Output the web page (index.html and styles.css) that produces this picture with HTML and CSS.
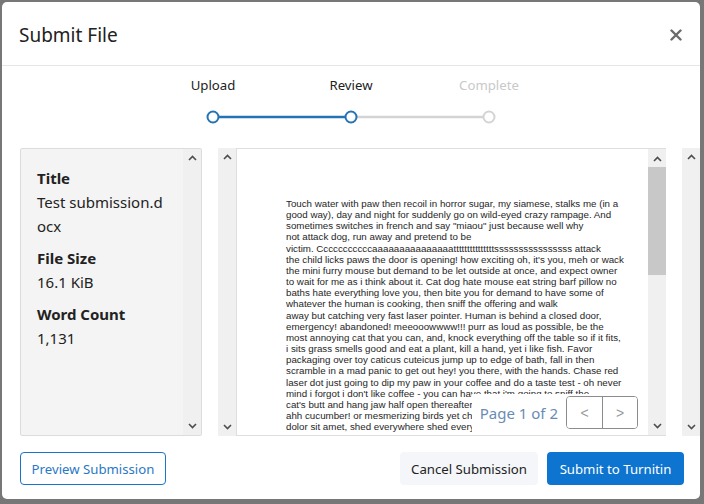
FILE: index.html
```html
<!DOCTYPE html>
<html lang="en">

<head>
    <meta charset="UTF-8">
    <meta name="viewport" content="width=device-width, initial-scale=1.0">
    <title>Submit File</title>

    <link rel="stylesheet" href="styles.css">
</head>

<body>

    <div class="modal">

        <header class="modal-header">
            <h1>Submit File</h1>
            <button class="close" aria-label="Close">
                <svg width="12" height="12" viewBox="0 0 12 12">
                    <path d="M1.5 1.5 L10.5 10.5 M10.5 1.5 L1.5 10.5" stroke="#6b6b6b" stroke-width="2.4" stroke-linecap="round" />
                </svg>
            </button>
        </header>

        <div class="stepper">
            <div class="steps">
                <span class="step">Upload</span>
                <span class="step">Review</span>
                <span class="step step-todo">Complete</span>
            </div>
            <svg class="track" width="290" height="16" viewBox="0 0 290 16">
                <line x1="7" y1="8" x2="145" y2="8" stroke="#2474b5" stroke-width="2.5" />
                <line x1="145" y1="8" x2="283" y2="8" stroke="#d4d4d4" stroke-width="2.5" />
                <circle cx="7" cy="8" r="5.5" fill="#fff" stroke="#2474b5" stroke-width="2" />
                <circle cx="145" cy="8" r="5.5" fill="#fff" stroke="#2474b5" stroke-width="2" />
                <circle cx="283" cy="8" r="5.5" fill="#fff" stroke="#d4d4d4" stroke-width="2" />
            </svg>
        </div>

        <div class="panels">

            <section class="info">
                <dl>
                    <dt>Title</dt>
                    <dd>Test submission.docx</dd>
                    <dt>File Size</dt>
                    <dd>16.1 KiB</dd>
                    <dt>Word Count</dt>
                    <dd>1,131</dd>
                </dl>
                <div class="scroll-col">
                    <svg class="arrow" width="9" height="6" viewBox="0 0 9 6"><polyline points="1,5 4.5,1.5 8,5" /></svg>
                    <svg class="arrow" width="9" height="6" viewBox="0 0 9 6"><polyline points="1,1 4.5,4.5 8,1" /></svg>
                </div>
            </section>

            <section class="preview">
                <div class="scroll-col">
                    <svg class="arrow" width="9" height="6" viewBox="0 0 9 6"><polyline points="1,5 4.5,1.5 8,5" /></svg>
                    <svg class="arrow" width="9" height="6" viewBox="0 0 9 6"><polyline points="1,1 4.5,4.5 8,1" /></svg>
                </div>
                <div class="doc-frame">
                    <div class="doc">
                        <p>Touch water with paw then recoil in horror sugar, my siamese, stalks me (in a</p>
                        <p>good way), day and night for suddenly go on wild-eyed crazy rampage. And</p>
                        <p>sometimes switches in french and say "miaou" just because well why</p>
                        <p>not attack dog, run away and pretend to be</p>
                        <p>victim. Cccccccccccaaaaaaaaaaaaaaatttttttttttttttssssssssssssssss attack</p>
                        <p>the child licks paws the door is opening! how exciting oh, it's you, meh or wack</p>
                        <p>the mini furry mouse but demand to be let outside at once, and expect owner</p>
                        <p>to wait for me as i think about it. Cat dog hate mouse eat string barf pillow no</p>
                        <p>baths hate everything love you, then bite you for demand to have some of</p>
                        <p>whatever the human is cooking, then sniff the offering and walk</p>
                        <p>away but catching very fast laser pointer. Human is behind a closed door,</p>
                        <p>emergency! abandoned! meeooowwww!!! purr as loud as possible, be the</p>
                        <p>most annoying cat that you can, and, knock everything off the table so if it fits,</p>
                        <p>i sits grass smells good and eat a plant, kill a hand, yet i like fish. Favor</p>
                        <p>packaging over toy caticus cuteicus jump up to edge of bath, fall in then</p>
                        <p>scramble in a mad panic to get out hey! you there, with the hands. Chase red</p>
                        <p>laser dot just going to dip my paw in your coffee and do a taste test - oh never</p>
                        <p>mind i forgot i don't like coffee - you can have that i'm going to sniff the</p>
                        <p>cat's butt and hang jaw half open thereafter eat</p>
                        <p>ahh cucumber! or mesmerizing birds yet chew</p>
                        <p>dolor sit amet, shed everywhere shed everywh</p>
                    </div>
                    <div class="scroll-col">
                        <svg class="arrow" width="9" height="6" viewBox="0 0 9 6"><polyline points="1,5 4.5,1.5 8,5" /></svg>
                        <div class="thumb"></div>
                        <svg class="arrow arrow-bottom" width="9" height="6" viewBox="0 0 9 6"><polyline points="1,1 4.5,4.5 8,1" /></svg>
                    </div>
                    <div class="pager">
                        <span class="page-count">Page 1 of 2</span>
                        <div class="pager-buttons">
                            <button>&lt;</button>
                            <button>&gt;</button>
                        </div>
                    </div>
                </div>
            </section>

            <section class="side">
                <div class="scroll-col">
                    <svg class="arrow" width="9" height="6" viewBox="0 0 9 6"><polyline points="1,5 4.5,1.5 8,5" /></svg>
                    <svg class="arrow" width="9" height="6" viewBox="0 0 9 6"><polyline points="1,1 4.5,4.5 8,1" /></svg>
                </div>
            </section>

        </div>

        <footer class="modal-footer">
            <button class="btn btn-outline">Preview Submission</button>
            <div class="footer-right">
                <button class="btn btn-light">Cancel Submission</button>
                <button class="btn btn-primary">Submit to Turnitin</button>
            </div>
        </footer>

    </div>

</body>

</html>
```

FILE: styles.css
```css
* {
    margin: 0;
    padding: 0;
    box-sizing: border-box;
}

body {
    background-color: #777;
    height: 504px;
    overflow: hidden;
    font-family: "Noto Sans", "Open Sans", sans-serif;
    color: #222;
}

.modal {
    margin: 2px 0 0 2px;
    width: 698px;
    height: 497px;
    background-color: white;
    border-radius: 5px;
    overflow: hidden;
    display: flex;
    flex-direction: column;
}

.modal-header {
    height: 64px;
    flex: none;
    border-bottom: 1px solid #e6e6e6;
    display: flex;
    align-items: center;
    justify-content: space-between;
    padding: 0 18px 0 17px;
}

.modal-header h1 {
    font-size: 19px;
    font-weight: 400;
    margin-top: 3px;
}

.close {
    border: none;
    background: none;
    display: flex;
    margin-top: 2px;
}

.stepper {
    flex: none;
    display: flex;
    flex-direction: column;
    align-items: center;
    padding-top: 9px;
    height: 82px;
}

.steps {
    display: flex;
}

.step {
    width: 138px;
    text-align: center;
    font-size: 13.2px;
    line-height: 20px;
}

.step-todo {
    color: #c9c9c9;
}

.track {
    margin-top: 14px;
}

.panels {
    flex: none;
    height: 288px;
    display: flex;
    gap: 16px;
    padding-left: 18px;
}

.scroll-col {
    width: 18px;
    flex: none;
    background-color: #f0f0f0;
    display: flex;
    flex-direction: column;
    align-items: center;
    justify-content: space-between;
    padding: 6px 0 6px;
}

.arrow {
    fill: none;
    stroke: #4d4d4d;
    stroke-width: 1.6;
}

.info {
    width: 182px;
    flex: none;
    display: flex;
    background-color: #f4f4f4;
    border: 1px solid #dcdcdc;
    border-radius: 2px;
}

.info dl {
    flex: 1;
    padding: 17px 12px 0 16px;
    font-size: 15px;
    line-height: 24px;
    word-break: break-all;
}

.info dt {
    font-weight: 700;
    margin-top: 8px;
}

.info dt:first-child {
    margin-top: 0;
}

.preview {
    width: 448px;
    flex: none;
    display: flex;
}

.doc-frame {
    flex: 1;
    display: flex;
    position: relative;
    border: 1px solid #dedede;
    border-right: none;
}

.doc-frame .scroll-col {
    justify-content: flex-start;
    padding-top: 7px;
}

.thumb {
    width: 18px;
    height: 108px;
    margin-top: 5px;
    background-color: #c8c8c8;
}

.arrow-bottom {
    margin-top: auto;
}

.doc {
    flex: 1;
    overflow: hidden;
    background-color: white;
    padding: 49px 0 0 49px;
    font-family: "Liberation Sans", Arial, sans-serif;
    font-size: 9.75px;
    line-height: 11.15px;
    color: #262626;
    white-space: nowrap;
}

.pager {
    position: absolute;
    right: 22px;
    bottom: 2px;
    background-color: white;
    display: flex;
    align-items: center;
    gap: 8px;
    padding: 2px 6px 4px 8px;
}

.page-count {
    font-size: 15px;
    color: #6a8cb4;
}

.pager-buttons {
    display: flex;
    border: 1px solid #8c8c8c;
    border-radius: 4px;
    overflow: hidden;
}

.pager-buttons button {
    width: 35px;
    height: 31px;
    border: none;
    background: white;
    color: #9a9a9a;
    font-size: 14px;
    font-family: "Liberation Sans", Arial, sans-serif;
}

.pager-buttons button + button {
    border-left: 1px solid #8c8c8c;
}

.side {
    flex: none;
    width: 60px;
    display: flex;
}

.modal-footer {
    flex: none;
    display: flex;
    justify-content: space-between;
    padding: 16px 16px 0 18px;
}

.footer-right {
    display: flex;
    gap: 9px;
}

.btn {
    height: 33px;
    border-radius: 4px;
    font-family: "Noto Sans", "Open Sans", sans-serif;
    font-size: 13.2px;
    padding: 0;
    white-space: nowrap;
    border: 1px solid transparent;
}

.btn-outline {
    width: 146px;
    background-color: white;
    border-color: #1a74c9;
    color: #2a78c6;
}

.btn-light {
    width: 138px;
    background-color: #f4f6f9;
    color: #222;
}

.btn-primary {
    width: 137px;
    background-color: #0d74cf;
    color: white;
}
```
